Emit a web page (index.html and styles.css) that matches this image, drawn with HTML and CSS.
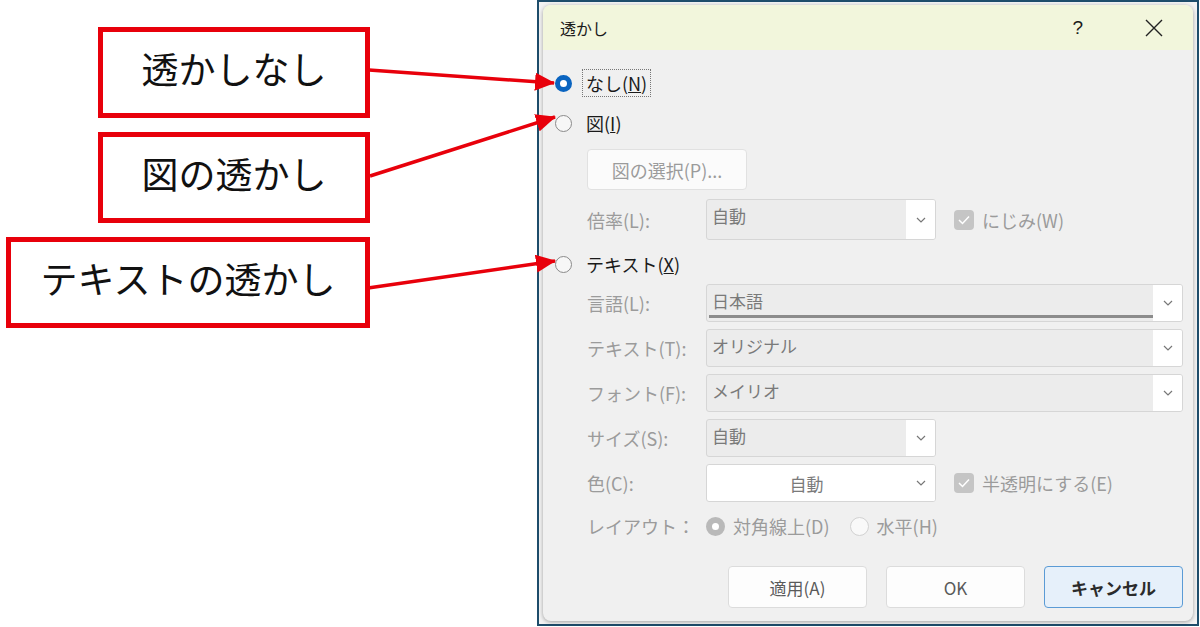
FILE: index.html
```html
<!DOCTYPE html>
<html lang="ja">
<head>
    <meta charset="UTF-8">
    <title>透かし</title>
    <link rel="stylesheet" href="styles.css">
</head>
<body>
    <div class="notes">
        <div class="note short">透かしなし</div>
        <div class="note short">図の透かし</div>
        <div class="note long">テキストの透かし</div>
    </div>

    <div class="frame">
        <div class="dialog">
            <div class="titlebar">
                <span class="title">透かし</span>
                <span class="help">?</span>
                <svg class="close" width="18" height="18" viewBox="0 0 18 18">
                    <path d="M1 1 L17 17 M17 1 L1 17" stroke="#222" stroke-width="1.4" fill="none"/>
                </svg>
            </div>

            <div class="body">
                <div class="radio-row">
                    <span class="radio checked"></span>
                    <span class="radio-label focus">なし(<u>N</u>)</span>
                </div>
                <div class="radio-row">
                    <span class="radio"></span>
                    <span class="radio-label">図(<u>I</u>)</span>
                </div>

                <div class="indent">
                    <button class="btn-pick">図の選択(P)...</button>
                </div>

                <div class="field indent">
                    <span class="field-label">倍率(L):</span>
                    <div class="combo short">
                        <span class="combo-text">自動</span>
                        <span class="combo-drop"><svg width="10" height="6" viewBox="0 0 10 6"><path d="M1 1 L5 5 L9 1" stroke="#777" stroke-width="1.2" fill="none"/></svg></span>
                    </div>
                    <span class="check"><svg width="12" height="10" viewBox="0 0 12 10"><path d="M1 5 L4.5 8.5 L11 1.5" stroke="#fff" stroke-width="1.5" fill="none"/></svg></span>
                    <span class="check-label">にじみ(W)</span>
                </div>

                <div class="radio-row">
                    <span class="radio"></span>
                    <span class="radio-label">テキスト(<u>X</u>)</span>
                </div>

                <div class="combo-list">
                    <div class="field indent">
                        <span class="field-label">言語(L):</span>
                        <div class="combo wide">
                            <span class="combo-text underline">日本語</span>
                            <span class="combo-drop"><svg width="10" height="6" viewBox="0 0 10 6"><path d="M1 1 L5 5 L9 1" stroke="#777" stroke-width="1.2" fill="none"/></svg></span>
                        </div>
                    </div>
                    <div class="field indent">
                        <span class="field-label">テキスト(T):</span>
                        <div class="combo wide">
                            <span class="combo-text">オリジナル</span>
                            <span class="combo-drop"><svg width="10" height="6" viewBox="0 0 10 6"><path d="M1 1 L5 5 L9 1" stroke="#777" stroke-width="1.2" fill="none"/></svg></span>
                        </div>
                    </div>
                    <div class="field indent">
                        <span class="field-label">フォント(F):</span>
                        <div class="combo wide">
                            <span class="combo-text">メイリオ</span>
                            <span class="combo-drop"><svg width="10" height="6" viewBox="0 0 10 6"><path d="M1 1 L5 5 L9 1" stroke="#777" stroke-width="1.2" fill="none"/></svg></span>
                        </div>
                    </div>
                    <div class="field indent">
                        <span class="field-label">サイズ(S):</span>
                        <div class="combo short">
                            <span class="combo-text">自動</span>
                            <span class="combo-drop"><svg width="10" height="6" viewBox="0 0 10 6"><path d="M1 1 L5 5 L9 1" stroke="#777" stroke-width="1.2" fill="none"/></svg></span>
                        </div>
                    </div>
                    <div class="field indent">
                        <span class="field-label">色(C):</span>
                        <div class="combo short white">
                            <span class="combo-text center">自動</span>
                            <span class="combo-drop"><svg width="10" height="6" viewBox="0 0 10 6"><path d="M1 1 L5 5 L9 1" stroke="#777" stroke-width="1.2" fill="none"/></svg></span>
                        </div>
                        <span class="check"><svg width="12" height="10" viewBox="0 0 12 10"><path d="M1 5 L4.5 8.5 L11 1.5" stroke="#fff" stroke-width="1.5" fill="none"/></svg></span>
                        <span class="check-label">半透明にする(E)</span>
                    </div>
                </div>

                <div class="field indent layout-row">
                    <span class="field-label">レイアウト：</span>
                    <span class="radio small dim-checked"></span>
                    <span class="check-label">対角線上(D)</span>
                    <span class="radio small dim"></span>
                    <span class="check-label">水平(H)</span>
                </div>

                <div class="actions">
                    <button class="btn">適用(A)</button>
                    <button class="btn">OK</button>
                    <button class="btn primary">キャンセル</button>
                </div>
            </div>
        </div>
    </div>

    <!-- arrows from the notes to the radio buttons -->
    <svg class="arrows" width="1200" height="627" viewBox="0 0 1200 627">
        <defs>
            <marker id="head" markerUnits="userSpaceOnUse" markerWidth="20" markerHeight="18" refX="19" refY="9" orient="auto">
                <path d="M0 0 L20 9 L0 18 z" fill="#e8000b"/>
            </marker>
        </defs>
        <line x1="369" y1="70" x2="554" y2="83" stroke="#e8000b" stroke-width="3.5" marker-end="url(#head)"/>
        <line x1="370" y1="176" x2="555" y2="117" stroke="#e8000b" stroke-width="3.5" marker-end="url(#head)"/>
        <line x1="368" y1="288" x2="555" y2="261" stroke="#e8000b" stroke-width="3.5" marker-end="url(#head)"/>
    </svg>
</body>
</html>
```

FILE: styles.css
```css
body {
    margin: 0;
    width: 1200px;
    height: 627px;
    overflow: hidden;
    position: relative;
    display: flex;
    background: #fff;
    font-family: "Noto Sans CJK JP", "Noto Sans", sans-serif;
}

/* red note boxes on the left */
.notes {
    width: 370px;
    padding-top: 27px;
    display: flex;
    flex-direction: column;
    align-items: flex-end;
    gap: 14px;
}

.note {
    box-sizing: border-box;
    height: 91px;
    padding-bottom: 10px;
    border: 5px solid #e8000b;
    display: flex;
    align-items: center;
    justify-content: center;
    font-size: 37px;
    color: #111;
}

.note.short {
    width: 272px;
}

.note.long {
    width: 364px;
}

.arrows {
    position: absolute;
    left: 0;
    top: 0;
    pointer-events: none;
}

/* dialog window */
.frame {
    margin-left: 167px;
    width: 662px;
    height: 626px;
    box-sizing: border-box;
    border: 2px solid #1e4d6b;
    padding: 3px 4px 3px 4px;
    background: #f3f3f3;
    display: flex;
}

.dialog {
    flex: 1;
    display: flex;
    flex-direction: column;
    background: #f0f0f0;
    border-radius: 8px;
    overflow: hidden;
    box-shadow: 0 1px 4px rgba(0,0,0,0.35);
}

.titlebar {
    height: 45px;
    flex-shrink: 0;
    display: flex;
    align-items: center;
    padding-left: 17px;
    background: #f2f6dc;
    color: #1a1a1a;
}

.title {
    flex: 1;
    font-size: 16px;
}

.help {
    font-family: "Liberation Sans", sans-serif;
    font-size: 19px;
    margin-right: 62px;
}

.close {
    margin-right: 30px;
}

.body {
    padding: 19px 10px 0 12px;
    font-size: 18px;
    color: #9b9b9b;
}

.radio-row {
    height: 28px;
    display: flex;
    align-items: center;
    gap: 10px;
    margin-bottom: 12px;
    color: #1a1a1a;
}

.radio {
    width: 17px;
    height: 17px;
    box-sizing: border-box;
    border-radius: 50%;
    border: 1px solid #8a8a8a;
    background: #f7f7f7;
    flex-shrink: 0;
}

.radio.checked {
    border: 5px solid #0a64c0;
    background: #fff;
}

.radio.small.dim-checked {
    width: 19px;
    height: 19px;
    border: 6px solid #b9b9b9;
    background: #fff;
}

.radio.small.dim {
    width: 19px;
    height: 19px;
    border: 1px solid #d2d2d2;
    background: #f9f9f9;
    margin-left: 20px;
}

.radio-label {
    line-height: 26px;
    padding: 0 3px;
    border: 1px dotted transparent;
}

.radio-label.focus {
    border-color: #777;
}

.indent {
    margin-left: 32px;
}

.btn-pick {
    width: 160px;
    height: 41px;
    margin-bottom: 9px;
    border: 1px solid #e1e1e1;
    border-radius: 4px;
    background: #fbfbfb;
    color: #9b9b9b;
    font-family: inherit;
    font-size: 18px;
    padding: 0;
}

.field {
    display: flex;
    align-items: center;
}

.field-label {
    width: 119px;
    flex-shrink: 0;
    white-space: nowrap;
}

.combo {
    box-sizing: border-box;
    height: 41px;
    display: flex;
    border: 1px solid #d6d6d6;
    border-radius: 3px;
    background: #ececec;
    color: #7a7a7a;
}

.combo.short {
    width: 230px;
}

.combo.wide {
    flex: 1;
}

.combo.white {
    background: #fff;
}

.combo-text {
    flex: 1;
    padding: 4px 0 0 5px;
    font-size: 17px;
    line-height: 24px;
}

.combo-text.center {
    text-align: center;
    padding: 7px 0 0 0;
}

.combo-text.underline {
    margin: 0 0 3px 2px;
    padding-left: 3px;
    border-bottom: 3px solid #8c8c8c;
}

.combo-drop {
    width: 29px;
    display: flex;
    align-items: center;
    justify-content: center;
    background: #fff;
    border-radius: 0 2px 2px 0;
}

.check {
    width: 20px;
    height: 20px;
    margin-left: 18px;
    margin-right: 8px;
    border-radius: 4px;
    background: #c5c5c5;
    display: flex;
    align-items: center;
    justify-content: center;
}

.check-label {
    white-space: nowrap;
}

.field + .radio-row {
    margin-top: 10px;
    margin-bottom: 6px;
}

.combo-list {
    display: flex;
    flex-direction: column;
    gap: 7px;
}

.combo-list .combo {
    height: 38px;
}

.layout-row {
    height: 28px;
    margin-top: 10px;
    gap: 0;
}

.layout-row .radio.small {
    margin-right: 8px;
}

.actions {
    margin-top: 26px;
    display: flex;
    justify-content: flex-end;
    gap: 19px;
}

.btn {
    width: 139px;
    height: 42px;
    border: 1px solid #dcdcdc;
    border-radius: 4px;
    background: #fdfdfd;
    color: #5a5a5a;
    font-family: inherit;
    font-size: 17px;
    padding: 0;
}

.btn.primary {
    background: #e6f0fa;
    border-color: #5b9bd5;
    color: #2b2b2b;
    font-weight: 600;
}
```
